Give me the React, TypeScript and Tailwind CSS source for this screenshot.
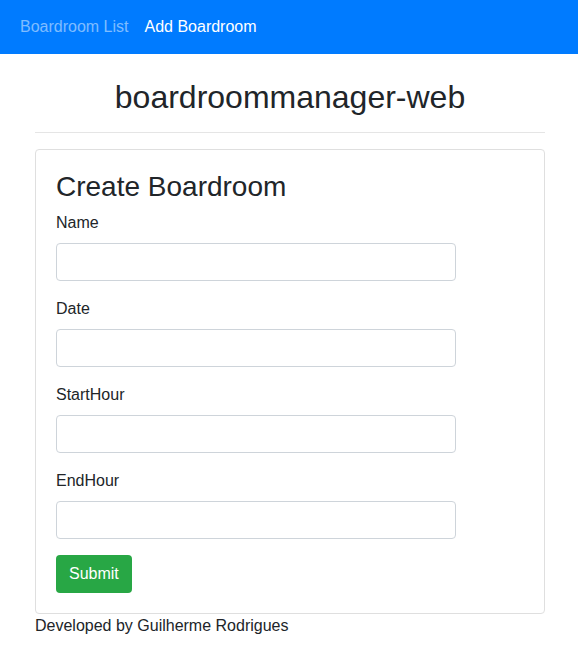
import React, { useState } from 'react';

const fields = ['Name', 'Date', 'StartHour', 'EndHour'];

export default function App() {
    const [values, setValues] = useState<Record<string, string>>({});

    return (
        <div className="min-h-screen bg-white font-['Liberation_Sans',Arial,sans-serif] text-[#212529]">
            <nav className="flex h-[54px] items-center gap-4 bg-[#007bff] px-5 text-base">
                <a className="text-white/50">Boardroom List</a>
                <a className="text-white">Add Boardroom</a>
            </nav>

            <div className="ml-5 w-[540px] px-[15px]">
                <h2 className="mt-6 text-center text-[32px] leading-[38px]">boardroommanager-web</h2>
                <hr className="mt-4 border-t border-[#e5e5e5]" />

                <div className="mt-4 rounded border border-[#dfdfdf] p-5">
                    <h3 className="mb-2 text-[28px] leading-[33px]">Create Boardroom</h3>
                    <form onSubmit={(e) => e.preventDefault()}>
                        {fields.map((f) => (
                            <div key={f} className="mb-4">
                                <label className="mb-2 block text-base leading-6">{f}</label>
                                <input
                                    type="text"
                                    value={values[f] || ''}
                                    onChange={(e) => setValues({ ...values, [f]: e.target.value })}
                                    className="block h-[38px] w-[400px] rounded border border-[#ced4da] px-3 text-base"
                                />
                            </div>
                        ))}
                        <button
                            type="submit"
                            className="h-[38px] rounded bg-[#28a745] px-[13px] text-base text-white"
                        >
                            Submit
                        </button>
                    </form>
                </div>
                <p className="text-base leading-6">Developed by Guilherme Rodrigues</p>
            </div>
        </div>
    );
}
